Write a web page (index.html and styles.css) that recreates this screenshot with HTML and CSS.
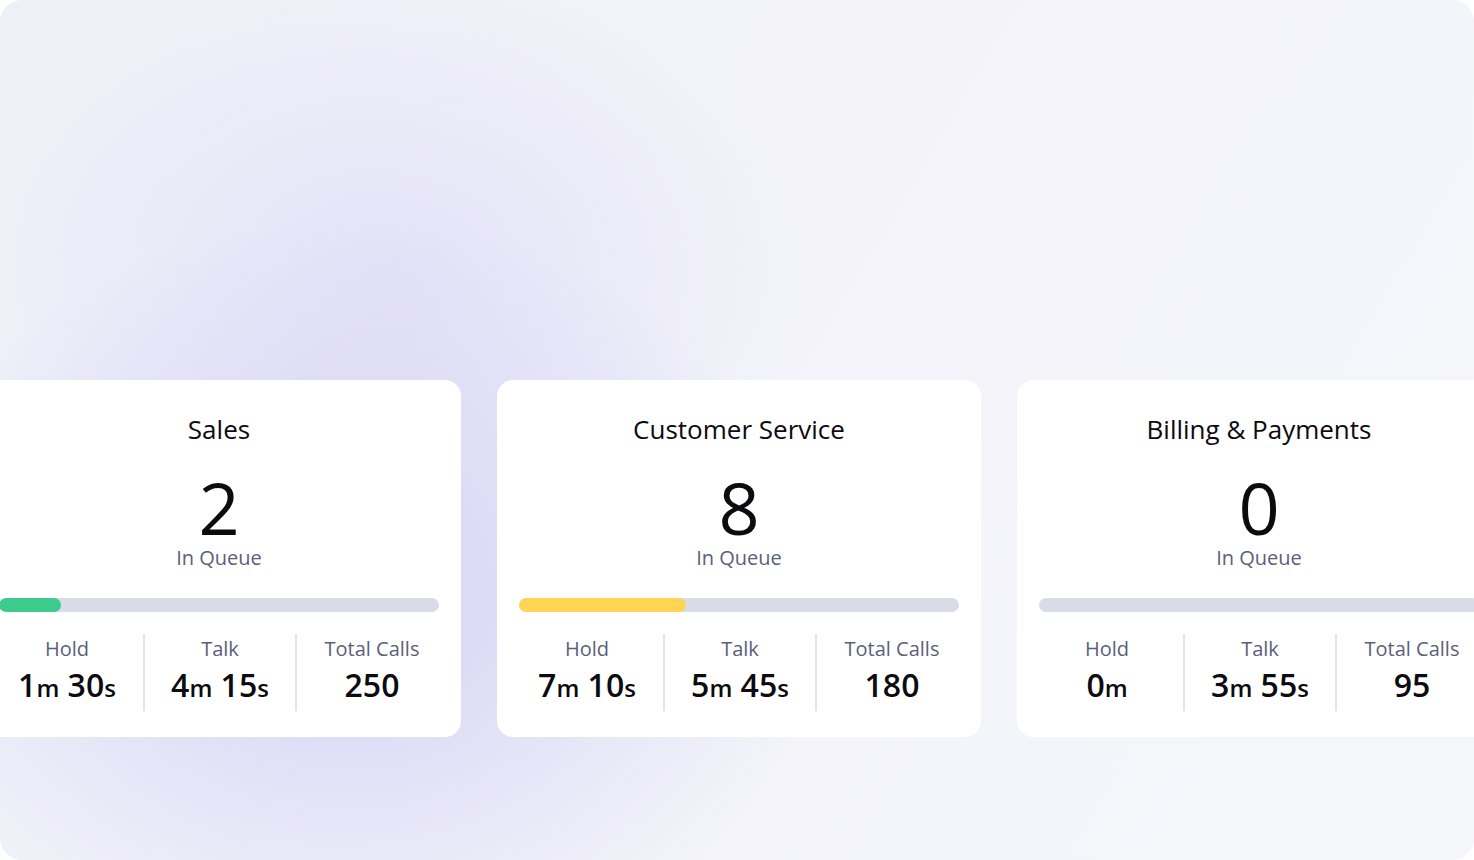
FILE: index.html
```html
<!DOCTYPE html>
<html lang="en">
<head>
  <meta charset="UTF-8">
  <title>Queues</title>
  <meta name="viewport" content="width=device-width, initial-scale=1.0">
  <link rel="stylesheet" href="styles.css">
</head>
<body>

<div class="escenario">
  <div class="colas">

    <div class="tarjeta">
      <div class="titulo">Sales</div>
      <div class="numero">2</div>
      <div class="subtitulo">In Queue</div>
      <div class="barra"><div class="relleno verde" style="width: 14%"></div></div>
      <div class="datos">
        <div class="dato">
          <div class="etiqueta">Hold</div>
          <div class="valor">1<small>m</small> 30<small>s</small></div>
        </div>
        <div class="dato">
          <div class="etiqueta">Talk</div>
          <div class="valor">4<small>m</small> 15<small>s</small></div>
        </div>
        <div class="dato">
          <div class="etiqueta">Total Calls</div>
          <div class="valor">250</div>
        </div>
      </div>
    </div>

    <div class="tarjeta">
      <div class="titulo">Customer Service</div>
      <div class="numero">8</div>
      <div class="subtitulo">In Queue</div>
      <div class="barra"><div class="relleno amarillo" style="width: 38%"></div></div>
      <div class="datos">
        <div class="dato">
          <div class="etiqueta">Hold</div>
          <div class="valor">7<small>m</small> 10<small>s</small></div>
        </div>
        <div class="dato">
          <div class="etiqueta">Talk</div>
          <div class="valor">5<small>m</small> 45<small>s</small></div>
        </div>
        <div class="dato">
          <div class="etiqueta">Total Calls</div>
          <div class="valor">180</div>
        </div>
      </div>
    </div>

    <div class="tarjeta">
      <div class="titulo">Billing &amp; Payments</div>
      <div class="numero">0</div>
      <div class="subtitulo">In Queue</div>
      <div class="barra"></div>
      <div class="datos">
        <div class="dato">
          <div class="etiqueta">Hold</div>
          <div class="valor">0<small>m</small></div>
        </div>
        <div class="dato">
          <div class="etiqueta">Talk</div>
          <div class="valor">3<small>m</small> 55<small>s</small></div>
        </div>
        <div class="dato">
          <div class="etiqueta">Total Calls</div>
          <div class="valor">95</div>
        </div>
      </div>
    </div>

  </div>
</div>

</body>
</html>
```

FILE: styles.css
```css
html, body { margin: 0; background: #ffffff; }
body { font-family: "Open Sans", "Noto Sans", sans-serif; color: #0b0b10; }

.escenario {
  width: 1474px; height: 860px;
  border-radius: 22px;
  overflow: hidden;
  background:
    radial-gradient(ellipse 480px 380px at 350px 600px, rgba(208, 203, 244, 0.85), rgba(208, 203, 244, 0) 100%),
    radial-gradient(ellipse 420px 300px at 390px 270px, rgba(222, 219, 246, 0.7), rgba(222, 219, 246, 0) 100%),
    linear-gradient(120deg, #efeff8 0%, #f3f3f9 45%, #f5f6fa 100%);
  padding-top: 380px;
  box-sizing: border-box;
}

.colas { display: flex; gap: 36px; margin-left: -23px; }

.tarjeta {
  flex: 0 0 484px;
  background: #ffffff;
  border-radius: 16px;
  padding: 33px 14px 26px;
  box-sizing: border-box;
  text-align: center;
}

.titulo { font-size: 26px; line-height: 32px; font-weight: 500; }
.numero { font-size: 72px; line-height: 76px; margin-top: 24px; font-weight: 500; }
.subtitulo { font-size: 20px; line-height: 24px; margin-top: 1px; color: #5b6078; }

.barra {
  margin: 28px 8px 0;
  height: 14px;
  border-radius: 7px;
  background: #d9dce7;
  overflow: hidden;
}
.relleno { height: 100%; border-radius: 7px; }
.verde { background: #3ccb8c; }
.amarillo { background: #ffd452; }

.datos { display: grid; grid-template-columns: 1fr 1fr 1fr; margin-top: 22px; }
.dato { padding: 3px 0 5px; }
.dato + .dato { border-left: 2px solid #e3e5ec; }
.etiqueta { font-size: 20px; line-height: 24px; color: #5b6078; }
.valor { font-size: 32px; line-height: 36px; margin-top: 6px; font-weight: 600; }
.valor small { font-size: 24px; font-weight: 600; }
```
